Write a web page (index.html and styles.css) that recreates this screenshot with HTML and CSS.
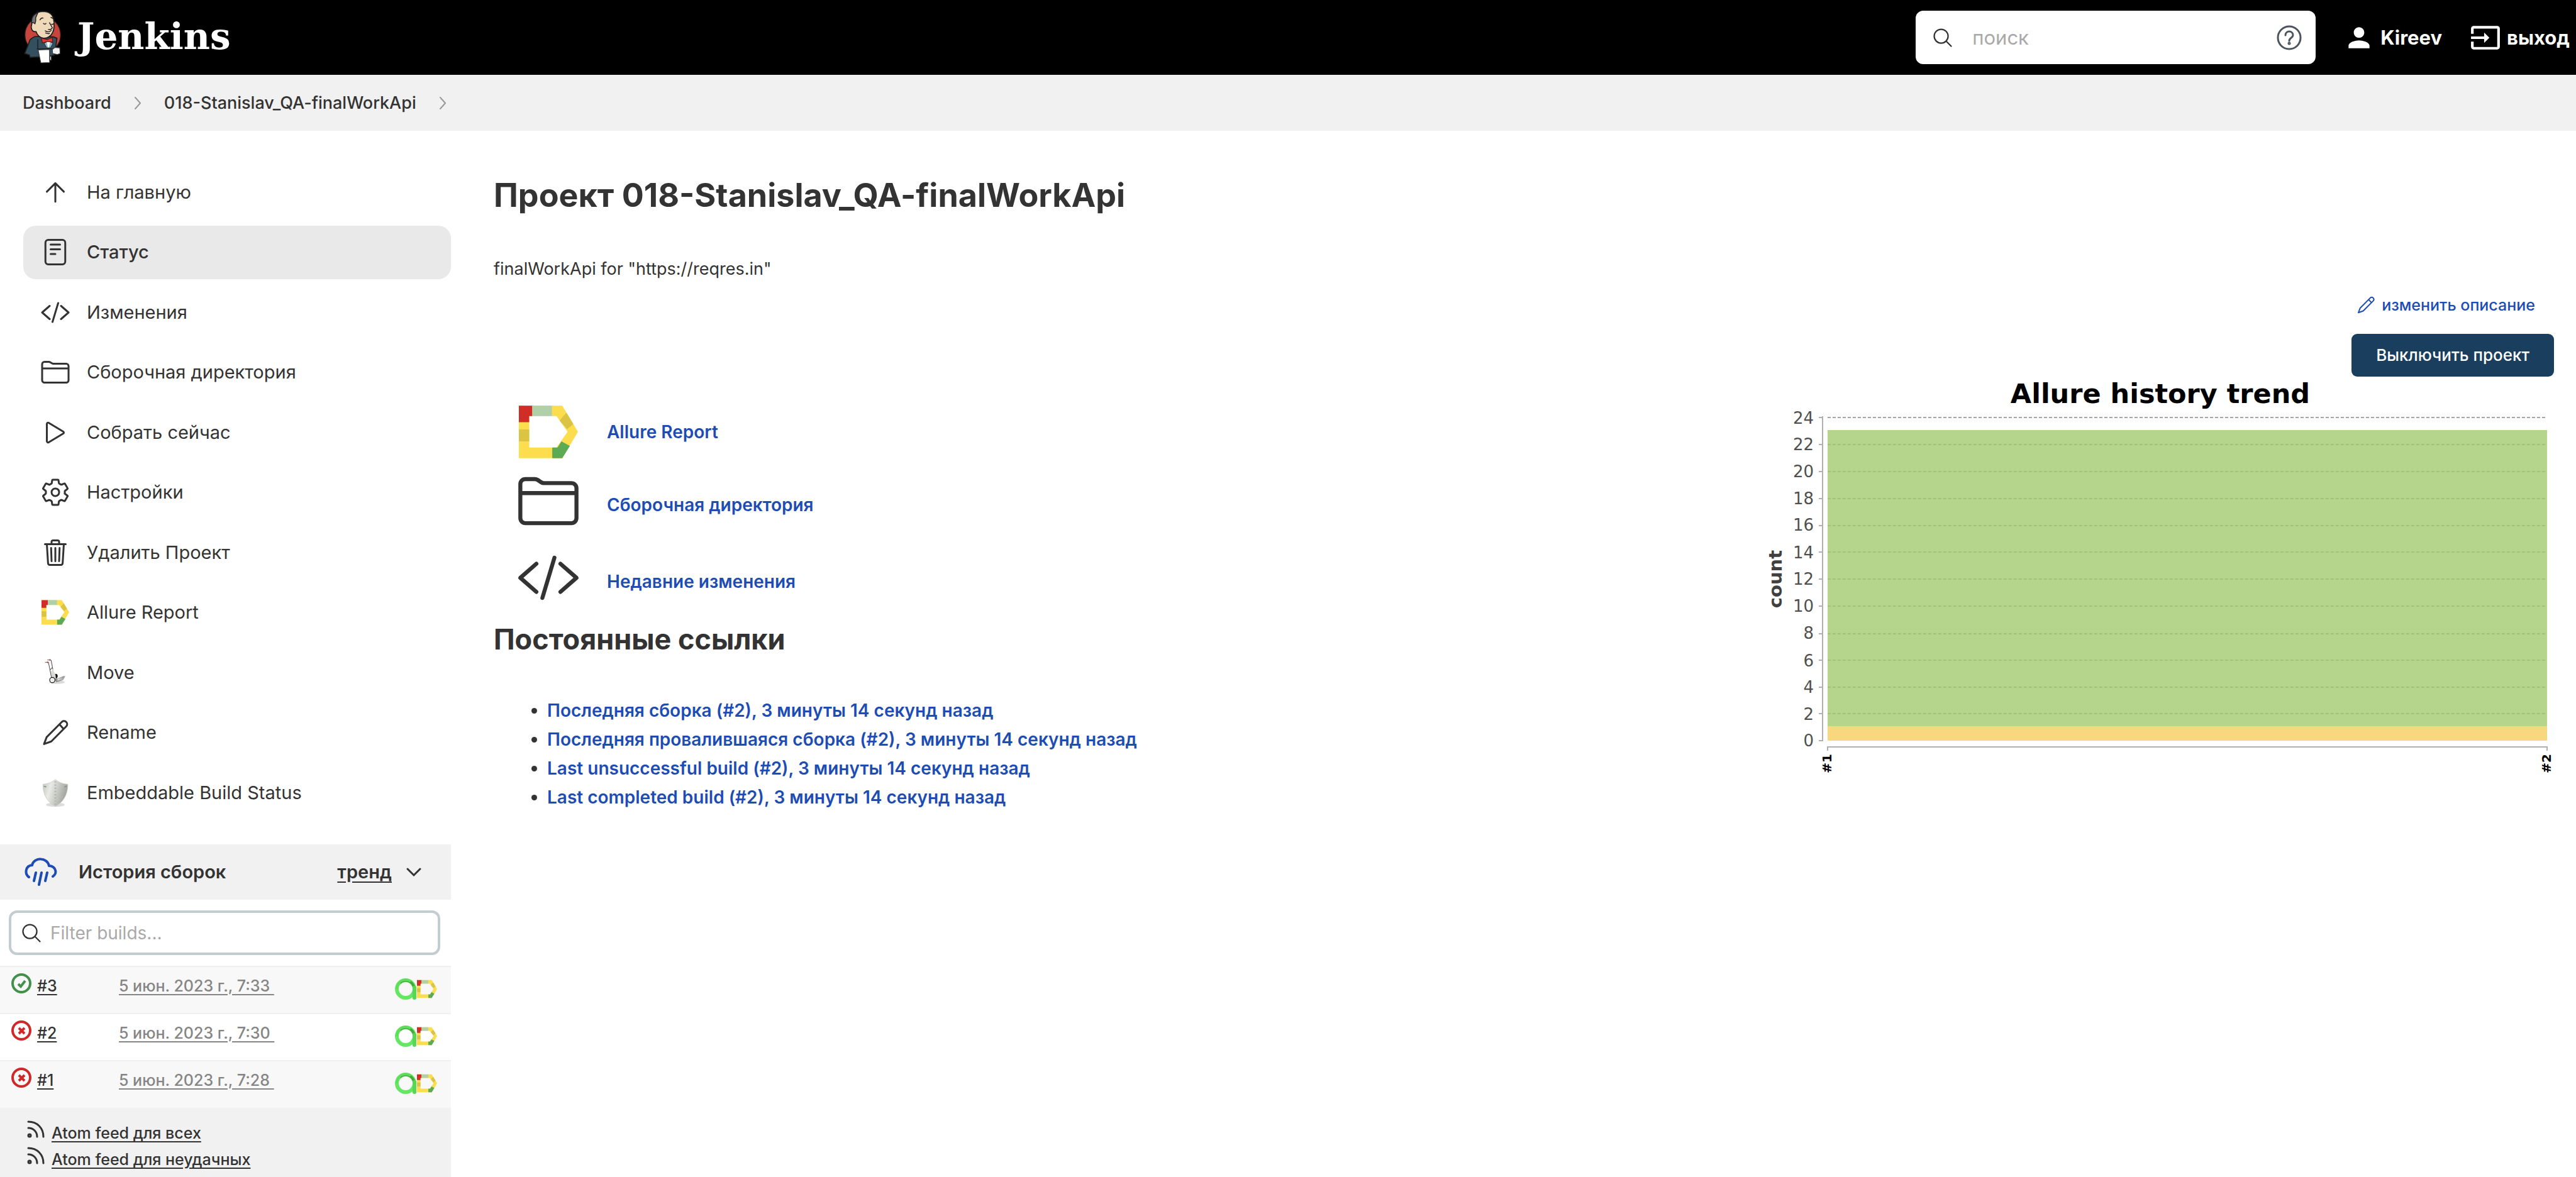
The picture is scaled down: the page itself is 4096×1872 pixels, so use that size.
FILE: index.html
```html
<!DOCTYPE html>
<html lang="ru">
<head>
<meta charset="utf-8">
<title>018-Stanislav_QA-finalWorkApi [Jenkins]</title>
<link rel="stylesheet" href="styles.css">
</head>
<body>
<svg class="sprite" aria-hidden="true">
  <symbol id="i-search" viewBox="0 0 512 512"><path d="M221.09 64a157.09 157.09 0 10157.09 157.09A157.1 157.1 0 00221.09 64zM338.29 338.29L448 448"/></symbol>
  <symbol id="i-up" viewBox="0 0 512 512"><path d="M112 244l144-144 144 144M256 120v292"/></symbol>
  <symbol id="i-doc" viewBox="0 0 512 512"><rect x="88" y="48" width="336" height="416" rx="48"/><path d="M176 128h160M176 208h160M176 288h80"/></symbol>
  <symbol id="i-code" viewBox="0 0 512 512"><path d="M160 368L32 256l128-112M352 368l128-112-128-112M304 96l-96 320"/></symbol>
  <symbol id="i-folder" viewBox="0 0 512 512"><path d="M440 432H72a40 40 0 01-40-40V120a40 40 0 0140-40h75.89a40 40 0 0122.19 6.72l27.84 18.56a40 40 0 0022.19 6.72H440a40 40 0 0140 40v240a40 40 0 01-40 40zM32 192h448"/></symbol>
  <symbol id="i-play" viewBox="0 0 512 512"><path d="M112 111v290c0 17.44 17 28.52 31 20.16l247.9-148.37c12.12-7.25 12.12-26.33 0-33.58L143 90.84c-14-8.36-31 2.72-31 20.16z"/></symbol>
  <symbol id="i-gear" viewBox="0 0 512 512"><path d="M262.29 192.31a64 64 0 1057.4 57.4 64.13 64.13 0 00-57.4-57.4zM416.39 256a154.34 154.34 0 01-1.53 20.79l45.21 35.46a10.81 10.81 0 012.45 13.75l-42.77 74a10.81 10.81 0 01-13.14 4.59l-44.9-18.08a16.11 16.11 0 00-15.17 1.75A164.48 164.48 0 01325 400.8a15.94 15.94 0 00-8.82 12.14l-6.73 47.89a11.08 11.08 0 01-10.68 9.17h-85.54a11.11 11.11 0 01-10.69-8.87l-6.72-47.82a16.07 16.07 0 00-9-12.22 155.3 155.3 0 01-21.46-12.57 16 16 0 00-15.11-1.71l-44.89 18.07a10.81 10.81 0 01-13.14-4.58l-42.77-74a10.8 10.8 0 012.45-13.75l38.21-30a16.05 16.05 0 006-14.08c-.36-4.17-.58-8.33-.58-12.5s.21-8.27.58-12.35a16 16 0 00-6.07-13.94l-38.19-30A10.81 10.81 0 0149.48 186l42.77-74a10.81 10.81 0 0113.14-4.59l44.9 18.08a16.11 16.11 0 0015.17-1.75A164.48 164.48 0 01187 111.2a15.94 15.94 0 008.82-12.14l6.73-47.89A11.08 11.08 0 01213.23 42h85.54a11.11 11.11 0 0110.69 8.87l6.72 47.82a16.07 16.07 0 009 12.22 155.3 155.3 0 0121.46 12.57 16 16 0 0015.11 1.71l44.89-18.07a10.81 10.81 0 0113.14 4.58l42.77 74a10.8 10.8 0 01-2.45 13.75l-38.21 30a16.05 16.05 0 00-6.05 14.08c.33 4.14.55 8.3.55 12.47z"/></symbol>
  <symbol id="i-trash" viewBox="0 0 512 512"><path d="M112 112l20 320c.95 18.49 14.4 32 32 32h184c17.67 0 30.87-13.51 32-32l20-320M80 112h352M192 112V72a23.93 23.93 0 0124-24h80a23.93 23.93 0 0124 24v40M256 176v224M184 176l8 224M328 176l-8 224"/></symbol>
  <symbol id="i-pencil" viewBox="0 0 512 512"><path d="M64 452L109 335 368 74a54 54 0 0176 76L187 408zM325 117l72 80"/></symbol>
  <symbol id="i-chevron" viewBox="0 0 10 20"><path d="M1 1l8 9-8 9"/></symbol>
  <symbol id="i-feed" viewBox="0 0 28 28"><path d="M2 2c14 0 24 10 24 24M2 12c8 0 14 6 14 14"/><circle cx="4" cy="24" r="2"/></symbol>
  <symbol id="i-ok" viewBox="0 0 32 32"><circle cx="16" cy="16" r="14"/><path d="M11 17l4 4 7-9"/></symbol>
  <symbol id="i-fail" viewBox="0 0 32 32"><circle cx="16" cy="16" r="14"/><path d="M12 12l9 9M21 12l-9 9"/></symbol>
  <symbol id="i-allure" viewBox="0 0 154 137">
    <path fill="#fbdd4d" d="M0 0h113l41 68-41 69H0zM27 27v82h71l29-41-29-41z" fill-rule="evenodd"/>
    <path fill="#d12d27" d="M0 0h35v27h-8v16H0z"/>
    <path fill="#afd0a9" d="M35 0h51v27H35z"/>
    <path fill="#dbc344" d="M0 62h27v31H0zM106 39l18-21 18 30-16 13z"/>
    <path fill="#5daa54" d="M87 109h14l10-16 22 12-20 32H87z"/>
  </symbol>
  <symbol id="i-allure-a" viewBox="0 0 34 34">
    <circle cx="17" cy="17" r="14" fill="none" stroke="#66e763" stroke-width="6"/>
    <path d="M8 7C16 0 29 4 31 17" fill="none" stroke="#46a83c" stroke-width="4"/>
    <path d="M3 17C3 4 16 0 25 5" fill="none" stroke="#5fdc5c" stroke-width="3"/>
    <path d="M31 15v16" fill="none" stroke="#58d655" stroke-width="6" stroke-linecap="round"/>
  </symbol>
</svg>

<header class="topbar">
  <a class="brand" href="#">
    <svg class="butler" viewBox="44 28 212 302" aria-hidden="true">
      <ellipse cx="150" cy="165" rx="101" ry="103" fill="#c8453d" stroke="#1d1d1f" stroke-width="5"/>
      <path d="M78 193q20-22 44-19l88 2 20 8-8 60-8 36-28 6-108 6-4-14-26-8z" fill="#34505f" stroke="#1d1d1f" stroke-width="6"/>
      <path d="M122 190v54M116 244h90" fill="none" stroke="#1d1d1f" stroke-width="5"/>
      <path d="M158 212l24-14 26 14-14 26h-22z" fill="#8db4cb" stroke="#1d1d1f" stroke-width="3"/>
      <path d="M172 202h20l-7 34h-6z" fill="#fff"/>
      <path d="M88 100c-4-52 30-66 62-68 34 0 54 14 60 40 6 20 6 58-4 78-8 20-28 34-50 34-20 0-38-18-44-38-24 4-32-22-24-42z" fill="#efd9b9" stroke="#1d1d1f" stroke-width="6"/>
      <path d="M88 98c-4-32 12-50 34-58l-12 28c2 14 0 24-4 34-6-6-12-8-18-4z" fill="#727277" stroke="#1d1d1f" stroke-width="5"/>
      <path d="M134 80q8-14 18-10M196 66q8 2 10 6M154 100q8 8 14 0M200 104q6 4 10-2M188 96l16 28q-6 14-22 10M164 142q20 12 34-2M166 154q14 6 22 2" fill="none" stroke="#1d1d1f" stroke-width="5" stroke-linecap="round"/>
      <path d="M142 183l32 8 30-11 2 26-30-4-28 8z" fill="#da3b34" stroke="#5b1512" stroke-width="4"/>
      <path d="M124 250l64-3 1 74-50 2z" fill="#fff" stroke="#3a3a3a" stroke-width="4"/>
      <path d="M204 248l14-12 28 2 2 32-16 6-26-6zM190 286h8v22h-8z" fill="#f2f2f2" stroke="#3a3a3a" stroke-width="4"/>
    </svg>
    <span class="brand-name">Jenkins</span>
  </a>
  <div class="topbar-tools">
    <div class="search">
      <svg class="line-icon search-icon" aria-hidden="true"><use href="#i-search"/></svg>
      <input class="search-input" type="text" placeholder="поиск" aria-label="поиск">
      <a class="help" href="#" aria-label="Help">
        <svg class="help-icon" viewBox="0 0 40 40" aria-hidden="true"><circle cx="20" cy="20" r="18"/><path d="M14 16c0-8 12-8 12 0 0 4-6 4-6 9"/><circle class="help-dot" cx="20" cy="29" r="1"/></svg>
      </a>
    </div>
    <a class="account" href="#">
      <svg class="account-icon" viewBox="0 0 24 24" aria-hidden="true"><path d="M12 12c2.21 0 4-1.79 4-4s-1.79-4-4-4-4 1.79-4 4 1.79 4 4 4zm0 2c-2.67 0-8 1.34-8 4v2h16v-2c0-2.66-5.33-4-8-4z"/></svg>
      <span>Kireev</span>
    </a>
    <a class="account" href="#">
      <svg class="account-icon" viewBox="0 0 24 24" aria-hidden="true"><path d="M21 3.01H3c-1.1 0-2 .9-2 2V9h2V4.99h18v14.03H3V15H1v4.01c0 1.1.9 1.98 2 1.98h18c1.1 0 2-.88 2-1.98v-14c0-1.11-.9-2-2-2zM11 16l4-4-4-4v3H1v2h10v3z"/></svg>
      <span>выход</span>
    </a>
  </div>
</header>

<nav class="breadcrumbs" aria-label="Breadcrumbs">
  <a href="#">Dashboard</a>
  <svg class="crumb-sep" aria-hidden="true"><use href="#i-chevron"/></svg>
  <a href="#">018-Stanislav_QA-finalWorkApi</a>
  <svg class="crumb-sep" aria-hidden="true"><use href="#i-chevron"/></svg>
</nav>

<div class="page">
  <aside class="sidebar">
    <ul class="tasks">
      <li><a class="task" href="#"><svg class="line-icon task-icon"><use href="#i-up"/></svg><span>На главную</span></a></li>
      <li><a class="task task-active" href="#"><svg class="line-icon task-icon"><use href="#i-doc"/></svg><span>Статус</span></a></li>
      <li><a class="task" href="#"><svg class="line-icon task-icon"><use href="#i-code"/></svg><span>Изменения</span></a></li>
      <li><a class="task" href="#"><svg class="line-icon task-icon"><use href="#i-folder"/></svg><span>Сборочная директория</span></a></li>
      <li><a class="task" href="#"><svg class="line-icon task-icon"><use href="#i-play"/></svg><span>Собрать сейчас</span></a></li>
      <li><a class="task" href="#"><svg class="line-icon task-icon"><use href="#i-gear"/></svg><span>Настройки</span></a></li>
      <li><a class="task" href="#"><svg class="line-icon task-icon"><use href="#i-trash"/></svg><span>Удалить Проект</span></a></li>
      <li><a class="task" href="#"><svg class="task-icon allure-small"><use href="#i-allure"/></svg><span>Allure Report</span></a></li>
      <li><a class="task" href="#">
        <svg class="task-icon" viewBox="0 0 170 170" aria-hidden="true">
          <defs><linearGradient id="steel" x1="0" x2="1"><stop offset="0" stop-color="#ecedea"/><stop offset="1" stop-color="#8c8e87"/></linearGradient></defs>
          <ellipse cx="94" cy="138" rx="44" ry="10" fill="#d9d9d9"/>
          <path d="M80 118l18 0 36-15-12 25-32 10z" fill="#8b8d87"/>
          <path d="M98 118l42-14-12 22-34 4z" fill="url(#steel)" stroke="#777" stroke-width="1"/>
          <ellipse cx="88" cy="104" rx="10" ry="13" fill="#111"/>
          <path d="M58 82l14-18 14 34 2 18-18 8z" fill="#d9dbd5"/>
          <path d="M46 26l18 90M61 14l10 52M57 68l10-12" fill="none" stroke="#5a5a5a" stroke-width="4"/>
          <path d="M27 26h20M40 13h20M42 21v10M55 8v10" fill="none" stroke="#a31717" stroke-width="3"/>
          <circle cx="68" cy="126" r="15" fill="#eef0ec" stroke="#111" stroke-width="4"/>
        </svg><span>Move</span></a></li>
      <li><a class="task" href="#"><svg class="line-icon task-icon"><use href="#i-pencil"/></svg><span>Rename</span></a></li>
      <li><a class="task" href="#">
        <svg class="task-icon" viewBox="0 0 170 170" aria-hidden="true">
          <defs><linearGradient id="shield" x1="0" x2="1" y2=".3"><stop offset="0" stop-color="#bfc2bb"/><stop offset=".35" stop-color="#e9eae7"/><stop offset="1" stop-color="#a3a69e"/></linearGradient></defs>
          <ellipse cx="85" cy="152" rx="52" ry="12" fill="#dcdcdc"/>
          <path d="M85 10c18 16 40 24 70 27 0 50-18 96-70 124C33 133 15 87 15 37c30-3 52-11 70-27z" fill="url(#shield)" stroke="#c9cbc6" stroke-width="3"/>
          <path d="M85 20v132" stroke="#b3b5af" stroke-width="10" stroke-dasharray="7 11"/>
          <path d="M20 48l14 4M150 48l-14 4" stroke="#8e918a" stroke-width="6"/>
        </svg><span>Embeddable Build Status</span></a></li>
    </ul>

    <section class="history">
      <div class="history-head">
        <svg class="weather" viewBox="0 0 52 46" aria-hidden="true"><path d="M7 31C0 26 1 13 12 12 15-1 36-1 39 13c12 1 13 13 6 17M18 24l-3 13M27 24l-4 19M36 24l-3 13"/></svg>
        <h2 class="history-title">История сборок</h2>
        <a class="trend" href="#">тренд</a>
        <button class="collapse" type="button" aria-label="Collapse"><svg viewBox="0 0 22 12"><path d="M1 1l10 10L21 1"/></svg></button>
      </div>
      <div class="filter">
        <svg class="line-icon search-icon" aria-hidden="true"><use href="#i-search"/></svg>
        <input class="filter-input" type="text" placeholder="Filter builds..." aria-label="Filter builds">
      </div>
      <table class="builds">
        <tbody>
          <tr>
            <td class="build-no"><div class="build-id"><svg class="status status-ok"><use href="#i-ok"/></svg><a href="#">#3</a></div></td>
            <td class="build-date"><a href="#">5 июн. 2023 г., 7:33&nbsp;</a></td>
            <td class="build-badges"><a class="badges" href="#" aria-label="Allure Report"><svg class="badge-a"><use href="#i-allure-a"/></svg><svg class="badge-d"><use href="#i-allure"/></svg></a></td>
          </tr>
          <tr>
            <td class="build-no"><div class="build-id"><svg class="status status-fail"><use href="#i-fail"/></svg><a href="#">#2</a></div></td>
            <td class="build-date"><a href="#">5 июн. 2023 г., 7:30&nbsp;</a></td>
            <td class="build-badges"><a class="badges" href="#" aria-label="Allure Report"><svg class="badge-a"><use href="#i-allure-a"/></svg><svg class="badge-d"><use href="#i-allure"/></svg></a></td>
          </tr>
          <tr>
            <td class="build-no"><div class="build-id"><svg class="status status-fail"><use href="#i-fail"/></svg><a href="#">#1</a></div></td>
            <td class="build-date"><a href="#">5 июн. 2023 г., 7:28&nbsp;</a></td>
            <td class="build-badges"><a class="badges" href="#" aria-label="Allure Report"><svg class="badge-a"><use href="#i-allure-a"/></svg><svg class="badge-d"><use href="#i-allure"/></svg></a></td>
          </tr>
        </tbody>
      </table>
      <div class="feeds">
        <a class="feed" href="#"><svg class="feed-icon"><use href="#i-feed"/></svg><span>Atom feed для всех</span></a>
        <a class="feed" href="#"><svg class="feed-icon"><use href="#i-feed"/></svg><span>Atom feed для неудачных</span></a>
      </div>
    </section>
  </aside>

  <main class="main">
    <h1 class="title">Проект 018-Stanislav_QA-finalWorkApi</h1>
    <p class="description">finalWorkApi for "https://reqres.in"</p>
    <div class="columns">
      <div class="links">
        <ul class="shortcuts">
          <li class="shortcut"><svg class="shortcut-icon shortcut-allure"><use href="#i-allure"/></svg><a href="#">Allure Report</a></li>
          <li class="shortcut shortcut-tall"><svg class="line-icon shortcut-icon"><use href="#i-folder"/></svg><a href="#">Сборочная директория</a></li>
          <li class="shortcut shortcut-tall"><svg class="line-icon shortcut-icon"><use href="#i-code"/></svg><a href="#">Недавние изменения</a></li>
        </ul>
        <h2 class="subtitle">Постоянные ссылки</h2>
        <ul class="permalinks">
          <li><a href="#">Последняя сборка (#2), 3 минуты 14 секунд назад</a></li>
          <li><a href="#">Последняя провалившаяся сборка (#2), 3 минуты 14 секунд назад</a></li>
          <li><a href="#">Last unsuccessful build (#2), 3 минуты 14 секунд назад</a></li>
          <li><a href="#">Last completed build (#2), 3 минуты 14 секунд назад</a></li>
        </ul>
      </div>
      <div class="side">
        <a class="edit" href="#"><svg class="line-icon edit-icon"><use href="#i-pencil"/></svg><span>изменить описание</span></a>
        <button class="disable" type="button">Выключить проект</button>
        <svg class="chart" viewBox="0 0 1261 640" role="img" aria-label="Allure history trend">
          <text class="chart-title" x="635" y="41">Allure history trend</text>
          <text class="chart-axis" x="0" y="0" transform="translate(33 321) rotate(-90)">count</text>
          <path class="chart-grid" d="M106 64H1250"/>
          <rect x="106" y="84" width="1144" height="471" fill="#b4d58b"/>
          <rect x="106" y="555" width="1144" height="23" fill="#f9d77f"/>
          <path class="chart-grid chart-grid-dim" d="M106 107H1250M106 150H1250M106 193H1250M106 236H1250M106 278H1250M106 321H1250M106 364H1250M106 408H1250M106 450H1250M106 493H1250M106 535H1250"/>
          <path class="chart-line" d="M98 62V579M92 64h6M92 107h6M92 150h6M92 193h6M92 236h6M92 278h6M92 321h6M92 364h6M92 408h6M92 450h6M92 493h6M92 535h6M92 578h6M106 594V588H1250V594"/>
          <g class="chart-tick">
            <text x="84" y="74">24</text><text x="84" y="116">22</text><text x="84" y="159">20</text><text x="84" y="202">18</text><text x="84" y="244">16</text><text x="84" y="288">14</text><text x="84" y="330">12</text><text x="84" y="373">10</text><text x="84" y="416">8</text><text x="84" y="460">6</text><text x="84" y="502">4</text><text x="84" y="545">2</text><text x="84" y="587">0</text>
          </g>
          <g class="chart-build">
            <text transform="translate(112 599) rotate(-90)">#1</text>
            <text transform="translate(1256 599) rotate(-90)">#2</text>
          </g>
        </svg>
      </div>
    </div>
  </main>
</div>
</body>
</html>
```
FILE: styles.css
```css
* { box-sizing: border-box; }

body {
  margin: 0;
  min-height: 100vh;
  display: flex;
  flex-direction: column;
  background: #fff;
  color: #333;
  font-family: Inter, "Noto Sans", sans-serif;
  font-size: 27px;
  line-height: 40px;
}

a { color: inherit; text-decoration: none; }
ul, h1, h2, p { margin: 0; padding: 0; }
svg { display: block; flex: none; }
.sprite { position: absolute; width: 0; height: 0; }

.line-icon {
  fill: none;
  stroke: currentColor;
  stroke-width: 32px;
  stroke-linecap: round;
  stroke-linejoin: round;
}

/* Top bar */
.topbar {
  display: flex;
  justify-content: space-between;
  align-items: center;
  height: 119px;
  padding: 0 10px 0 38px;
  background: #000;
  color: #fff;
  font-size: 31px;
}
.brand { display: flex; align-items: center; gap: 25px; }
.butler { width: 60px; height: 85px; }
.brand-name {
  font-family: "DejaVu Serif", serif;
  font-size: 58px;
  line-height: 76px;
  padding-bottom: 4px;
  font-weight: 700;
}
.topbar-tools { display: flex; align-items: center; gap: 44px; }
.search {
  display: flex;
  align-items: center;
  width: 636px;
  height: 85px;
  padding: 0 22px 0 25px;
  border-radius: 12px;
  background: #fff;
  color: #333;
}
.search-icon { width: 36px; height: 36px; }
input {
  flex: 1;
  min-width: 0;
  border: 0;
  outline: 0;
  padding: 0;
  background: none;
  color: #333;
  font: inherit;
}
input::placeholder { color: #a9a9a9; opacity: 1; }
.search-input { margin-left: 29px; }
.help-icon {
  width: 40px;
  height: 40px;
  fill: none;
  stroke: #4d545d;
  stroke-width: 3px;
  stroke-linecap: round;
}
.account { display: flex; align-items: center; gap: 9px; font-weight: 700; }
.account-icon { width: 50px; height: 50px; fill: currentColor; }

/* Breadcrumbs */
.breadcrumbs {
  display: flex;
  align-items: center;
  gap: 37px;
  height: 89px;
  padding: 0 36px;
  background: #f1f1f1;
  font-weight: 500;
}
.crumb-sep {
  width: 10px;
  height: 20px;
  fill: none;
  stroke: #999;
  stroke-width: 2px;
  stroke-linecap: round;
}

.page { display: flex; flex: 1; }

/* Sidebar */
.sidebar {
  display: flex;
  flex-direction: column;
  flex: 0 0 717px;
  padding-top: 55px;
}
.tasks {
  display: flex;
  flex-direction: column;
  justify-content: space-between;
  min-height: 1040px;
  padding-left: 37px;
  font-size: 29px;
  list-style: none;
}
.task {
  display: flex;
  align-items: center;
  gap: 26px;
  height: 85px;
  padding-left: 27px;
  border-radius: 20px;
}
.task-active { background: #e9e9e9; font-weight: 500; }
.task-icon { width: 48px; height: 48px; }
.allure-small { padding: 2px; }

.history { display: flex; flex-direction: column; flex: 1; margin-top: 40px; }
.history-head {
  display: flex;
  align-items: center;
  height: 88px;
  padding: 0 48px 0 39px;
  background: #f1f1f1;
  font-size: 29px;
}
.weather {
  width: 52px;
  height: 46px;
  fill: none;
  stroke: #1d4db4;
  stroke-width: 4px;
  stroke-linecap: round;
}
.history-title { flex: 1; margin-left: 34px; font-size: 29px; font-weight: 600; }
.trend { font-weight: 600; text-decoration: underline; text-underline-offset: 5px; }
.collapse { margin-left: 24px; padding: 0; border: 0; background: none; color: inherit; }
.collapse svg {
  width: 22px;
  height: 12px;
  fill: none;
  stroke: currentColor;
  stroke-width: 3px;
  stroke-linecap: round;
  overflow: visible;
}
.filter {
  display: flex;
  align-items: center;
  gap: 12px;
  height: 71px;
  margin: 17px 17px 17px 14px;
  padding: 0 14px;
  border: 4px solid #c3ccd1;
  border-radius: 13px;
  font-size: 28px;
}

.builds { width: 100%; border-collapse: collapse; font-size: 25px; line-height: 32px; }
.builds tr { height: 75px; border-top: 2px solid #efefef; }
.builds tr:nth-child(odd) { background: #f8f8f8; }
.builds td { padding: 0; vertical-align: top; }
.builds a { font-weight: 500; text-decoration: underline; text-underline-offset: 4px; }
.build-no { width: 189px; }
.build-id { display: flex; align-items: flex-start; gap: 9px; padding: 10px 0 0 18px; }
.build-id a { padding-top: 4px; }
.status {
  width: 32px;
  height: 32px;
  fill: none;
  stroke: currentColor;
  stroke-width: 4px;
}
.status-ok { color: #42904a; }
.status-fail { color: #cf2828; }
.build-date a { display: inline-block; padding-top: 14px; color: #858585; }
.badges { display: flex; justify-content: flex-end; gap: 1px; padding: 18px 22px 0 0; }
.badge-a { width: 34px; height: 34px; }
.badge-d { width: 32px; height: 34px; }

.feeds { flex: 1; padding: 13px 0 0 43px; background: #f1f1f1; font-size: 25px; line-height: 42px; }
.feed { display: flex; align-items: center; gap: 11px; height: 42px; font-weight: 500; }
.feed span { padding-top: 12px; text-decoration: underline; text-underline-offset: 4px; }
.feed-icon {
  width: 28px;
  height: 28px;
  fill: none;
  stroke: currentColor;
  stroke-width: 3px;
  stroke-linecap: round;
}

/* Project page */
.main { flex: 1; min-width: 0; padding: 71px 35px 0 68px; }
.title { font-size: 52px; line-height: 64px; font-weight: 700; }
.description { margin-top: 65px; }
.columns { display: flex; justify-content: space-between; margin-top: 19px; }
.links { padding-top: 165px; color: #1d4db4; font-size: 28px; }
.links a { font-weight: 600; }
.shortcuts { padding-left: 36px; list-style: none; }
.shortcut { display: flex; align-items: center; gap: 42px; height: 110px; }
.shortcut-tall { height: 122px; }
.shortcut-tall .shortcut-icon { margin-bottom: 12px; }
.shortcut-icon { width: 102px; height: 102px; color: #333; }
.shortcut-allure { padding: 4px; }
.subtitle { margin-top: 3px; font-size: 45px; line-height: 56px; font-weight: 700; color: #333; }
.permalinks { margin-top: 62px; padding-left: 85px; line-height: 46px; }
.permalinks li::marker { color: #333; }

.side { display: flex; flex-direction: column; align-items: flex-end; }
.edit {
  display: flex;
  align-items: center;
  gap: 9px;
  height: 36px;
  padding-right: 30px;
  color: #1d4db4;
  font-size: 25px;
  font-weight: 500;
}
.edit-icon { width: 32px; height: 32px; }
.disable {
  height: 68px;
  margin-top: 28px;
  padding: 0 39px;
  border: 0;
  border-radius: 9px;
  background: #1a3f5e;
  color: #fff;
  font: inherit;
  font-size: 26px;
  font-weight: 500;
}
.chart { width: 1261px; height: 640px; margin-top: 1px; font-family: "DejaVu Sans", sans-serif; }
.chart-title { font-size: 43px; font-weight: 700; text-anchor: middle; fill: #000; }
.chart-axis { font-size: 29px; font-weight: 700; text-anchor: middle; fill: #404040; }
.chart-tick { font-size: 26px; text-anchor: end; fill: #505050; }
.chart-build { font-size: 20px; font-weight: 700; text-anchor: end; fill: #000; }
.chart-line { fill: none; stroke: #b0b0b0; stroke-width: 2px; }
.chart-grid { fill: none; stroke: #a6a6a6; stroke-width: 2px; stroke-dasharray: 5 3; }
.chart-grid-dim { stroke: #a3c17d; }
```
